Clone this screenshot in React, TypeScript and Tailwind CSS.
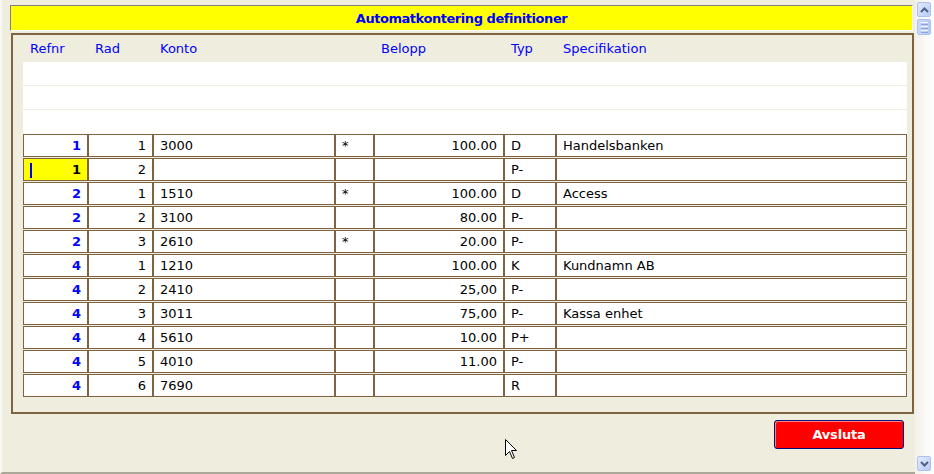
import React from 'react';

type Row = {
  ref: string;
  rad: string;
  konto: string;
  star: string;
  belopp: string;
  typ: string;
  spec: string;
};

const rows: Row[] = [
  { ref: '1', rad: '1', konto: '3000', star: '*', belopp: '100.00', typ: 'D', spec: 'Handelsbanken' },
  { ref: '1', rad: '2', konto: '', star: '', belopp: '', typ: 'P-', spec: '' },
  { ref: '2', rad: '1', konto: '1510', star: '*', belopp: '100.00', typ: 'D', spec: 'Access' },
  { ref: '2', rad: '2', konto: '3100', star: '', belopp: '80.00', typ: 'P-', spec: '' },
  { ref: '2', rad: '3', konto: '2610', star: '*', belopp: '20.00', typ: 'P-', spec: '' },
  { ref: '4', rad: '1', konto: '1210', star: '', belopp: '100.00', typ: 'K', spec: 'Kundnamn AB' },
  { ref: '4', rad: '2', konto: '2410', star: '', belopp: '25,00', typ: 'P-', spec: '' },
  { ref: '4', rad: '3', konto: '3011', star: '', belopp: '75,00', typ: 'P-', spec: 'Kassa enhet' },
  { ref: '4', rad: '4', konto: '5610', star: '', belopp: '10.00', typ: 'P+', spec: '' },
  { ref: '4', rad: '5', konto: '4010', star: '', belopp: '11.00', typ: 'P-', spec: '' },
  { ref: '4', rad: '6', konto: '7690', star: '', belopp: '', typ: 'R', spec: '' },
];

// shared look of one grid cell (background set per cell)
const cell = 'h-[23px] border border-[#806442] flex items-center px-[6px] text-black';

function ScrollButton({ down }: { down?: boolean }) {
  return (
    <div className="w-[14px] h-[15px] ml-[2px] rounded-[2px] border border-[#AFC2EE] bg-gradient-to-br from-[#E2EAFE] to-[#B9CBF6] flex items-center justify-center">
      <svg width="9" height="6" viewBox="0 0 9 6">
        <path
          d={down ? 'M1 1 L4.5 4.5 L8 1' : 'M1 5 L4.5 1.5 L8 5'}
          fill="none"
          stroke="#4D6185"
          strokeWidth="2"
        />
      </svg>
    </div>
  );
}

export default function App() {
  return (
    <div className="relative w-[934px] h-[474px] overflow-hidden flex bg-[#EFEEDE] font-['DejaVu_Sans',sans-serif] text-[13px] leading-none">
      {/* Main form */}
      <div className="w-[915px] h-[474px] flex flex-col border-l-2 border-b-2 border-l-[#F8F8F2] border-b-[#ACA899] pl-[8px] pt-[5px]">
        {/* Title bar */}
        <div className="w-[903px] h-[26px] bg-[#FFFF00] border border-t-[#808080] border-l-[#808080] border-b-white border-r-white flex items-center justify-center">
          <span className="font-bold text-[#0000FF] tracking-[-0.45px]">Automatkontering definitioner</span>
        </div>

        {/* Frame */}
        <div className="ml-[1px] mt-[2px] w-[903px] h-[381px] border-2 border-[#806442] pl-[10px] pr-[5px]">
          <div className="flex h-[27px] items-center text-[#0000FF]">
            <div className="w-[65px] pl-[7px]">Refnr</div>
            <div className="w-[65px] pl-[7px]">Rad</div>
            <div className="w-[182px] pl-[7px]">Konto</div>
            <div className="w-[39px] pl-[7px]"></div>
            <div className="w-[130px] pl-[7px]">Belopp</div>
            <div className="w-[52px] pl-[7px]">Typ</div>
            <div className="w-[351px] pl-[7px]">Specifikation</div>
          </div>

          <div className="w-[884px] bg-white">
            <div className="h-[23px] border-b border-[#EFEEDE] box-content"></div>
            <div className="h-[23px] border-b border-[#EFEEDE] box-content"></div>
            <div className="h-[24px]"></div>
          </div>

          <div className="flex flex-col gap-[1px] w-[884px]">
            {rows.map((r, i) => {
              const selected = i === 1;
              return (
                <div key={i} className="flex">
                  <div
                    className={`${cell} relative w-[65px] justify-end font-bold ${
                      selected ? 'bg-[#FFFF00]' : 'bg-white'
                    }`}
                  >
                    {selected && <span className="absolute left-[6px] top-[4px] w-[2px] h-[15px] bg-[#0000FF]"></span>}
                    <span className={selected ? 'text-black' : 'text-[#0000FF]'}>{r.ref}</span>
                  </div>
                  <div className={`${cell} bg-white w-[65px] justify-end`}>{r.rad}</div>
                  <div className={`${cell} bg-white w-[182px]`}>{r.konto}</div>
                  <div className="h-[23px] w-[39px] border border-[#806442] bg-white px-[6px] pt-[4px] text-black">
                    {r.star}
                  </div>
                  <div className={`${cell} bg-white w-[130px] justify-end`}>{r.belopp}</div>
                  <div className={`${cell} bg-white w-[52px]`}>{r.typ}</div>
                  <div className={`${cell} bg-white w-[351px]`}>{r.spec}</div>
                </div>
              );
            })}
          </div>
        </div>

        {/* Buttons */}
        <div className="flex justify-end pr-[11px] mt-[6px]">
          <button className="w-[130px] h-[29px] rounded-[3px] border border-[#00107A] bg-[#FF0000] shadow-[inset_1px_1px_0_#FF8080] text-white font-bold tracking-[-0.2px] flex items-center justify-center">
            Avsluta
          </button>
        </div>
      </div>

      {/* Scrollbar */}
      <div className="w-[19px] h-[474px] flex flex-col bg-gradient-to-r from-[#F2F1EA] to-white pt-[2px] pb-[3px]">
        <ScrollButton />
        <div className="w-[14px] h-[16px] ml-[2px] mt-[2px] rounded-[2px] border border-[#AFC2EE] bg-gradient-to-r from-[#C9D8FC] to-[#B5C8F6] flex flex-col items-center justify-center gap-[1px]">
          <span className="w-[7px] h-[1px] bg-[#EEF3FF]"></span>
          <span className="w-[7px] h-[1px] bg-[#8CA3DB]"></span>
          <span className="w-[7px] h-[1px] bg-[#EEF3FF]"></span>
          <span className="w-[7px] h-[1px] bg-[#8CA3DB]"></span>
          <span className="w-[7px] h-[1px] bg-[#EEF3FF]"></span>
          <span className="w-[7px] h-[1px] bg-[#8CA3DB]"></span>
        </div>
        <div className="flex-1"></div>
        <ScrollButton down />
      </div>

      {/* Mouse pointer */}
      <svg className="absolute left-[505px] top-[439px]" width="13" height="21" viewBox="0 0 13 21">
        <path
          d="M0.5 0.5 L0.5 16.5 L4.5 12.5 L7.5 19.5 L9.5 18.5 L6.5 11.5 L11.5 11.5 Z"
          fill="white"
          stroke="black"
          strokeWidth="1"
        />
      </svg>
    </div>
  );
}
